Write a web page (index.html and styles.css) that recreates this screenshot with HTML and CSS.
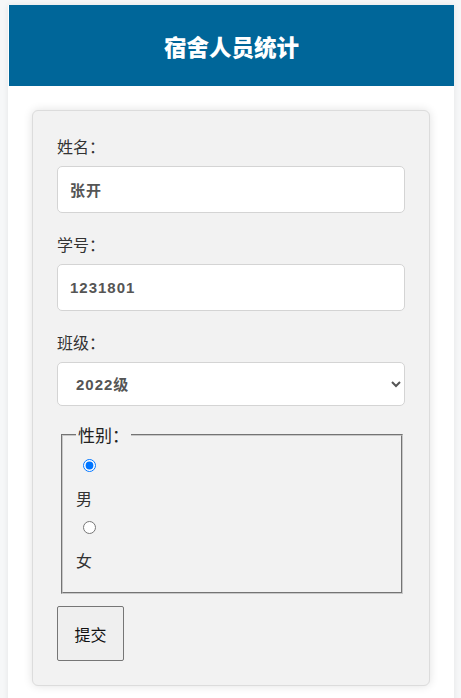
FILE: index.html
```html
<!DOCTYPE html>
<html lang="zh-CN">
<head>
  <meta charset="UTF-8">
  <meta name="viewport" content="width=device-width, initial-scale=1.0">
  <title>宿舍人员统计</title>
  <link rel="stylesheet" href="styles.css">
</head>
<body>
  <div class="container">
    <header>
      <h1>宿舍人员统计</h1>
    </header>

    <div class="main">
      <form class="card">
        <label for="name">姓名：</label>
        <input type="text" id="name" value="张开">

        <label for="number">学号：</label>
        <input type="text" id="number" value="1231801">

        <label for="grade">班级：</label>
        <select id="grade">
          <option>2022级</option>
          <option>2023级</option>
          <option>2024级</option>
        </select>

        <fieldset>
          <legend>性别：</legend>
          <input type="radio" name="sex" id="male" checked>
          <label for="male" class="radio-label">男</label>
          <input type="radio" name="sex" id="female">
          <label for="female" class="radio-label">女</label>
        </fieldset>

        <button type="submit">提交</button>
      </form>
    </div>
  </div>
</body>
</html>
```

FILE: styles.css
```css
body {
  margin: 0;
  background-color: #f6f7f8;
  font-family: "Noto Sans CJK SC", "Liberation Sans", sans-serif;
  color: #333;
}
.container {
  width: 446px;
  margin: 5px 0 0 8px;
  background-color: #fff;
  min-height: 693px;
  box-shadow: 0 0 6px rgba(0, 0, 0, 0.08);
}
header {
  background-color: #006699; /* title bar blue */
  height: 81px;
  margin-left: 1px;
  display: flex;
  align-items: center;
  justify-content: center;
}
h1 {
  margin: 0;
  color: #fff;
  font-size: 22.5px;
  font-weight: 900;
}
.main {
  padding: 24px;
}
.card {
  background-color: #f2f2f2;
  border: 1px solid #dcdcdc;
  border-radius: 6px;
  box-shadow: 0 0 10px rgba(0, 0, 0, 0.12);
  padding: 23px 24px 24px;
}
.card > label {
  display: block;
  font-size: 16px;
  line-height: 24px;
  margin-bottom: 8px;
}
input[type="text"], select {
  display: block;
  box-sizing: border-box;
  width: 100%;
  height: 47px;
  margin: 0 0 19px;
  padding: 0 12px;
  border: 1px solid #d4d4d4;
  border-radius: 5px;
  background-color: #fff;
  font-family: "Liberation Sans", "Noto Sans CJK SC", sans-serif;
  font-size: 15px;
  font-weight: bold;
  letter-spacing: 1px;
  color: #555;
}
select {
  height: 44px;
  padding-left: 14px;
  margin-bottom: 16px;
}
fieldset {
  margin: 0 2px 12px 4px;
  padding: 0 13px 20px;
  border: 2px groove #c8c8c8;
}
legend {
  font-size: 17px;
  line-height: 26px;
  color: #222;
  padding: 0 2px;
}
input[type="radio"] {
  display: block;
  width: 13px;
  height: 13px;
  margin: 11px 0 0 7px;
}
.radio-label {
  display: block;
  font-size: 16px;
  line-height: 24px;
  margin-top: 14px;
}
button {
  font-family: "Noto Sans CJK SC", sans-serif;
  font-size: 16px;
  color: #111;
  width: 67px;
  height: 55px;
  background-color: #efefef;
  border: 1px solid #767676;
  border-radius: 2px;
  cursor: pointer;
}
```
